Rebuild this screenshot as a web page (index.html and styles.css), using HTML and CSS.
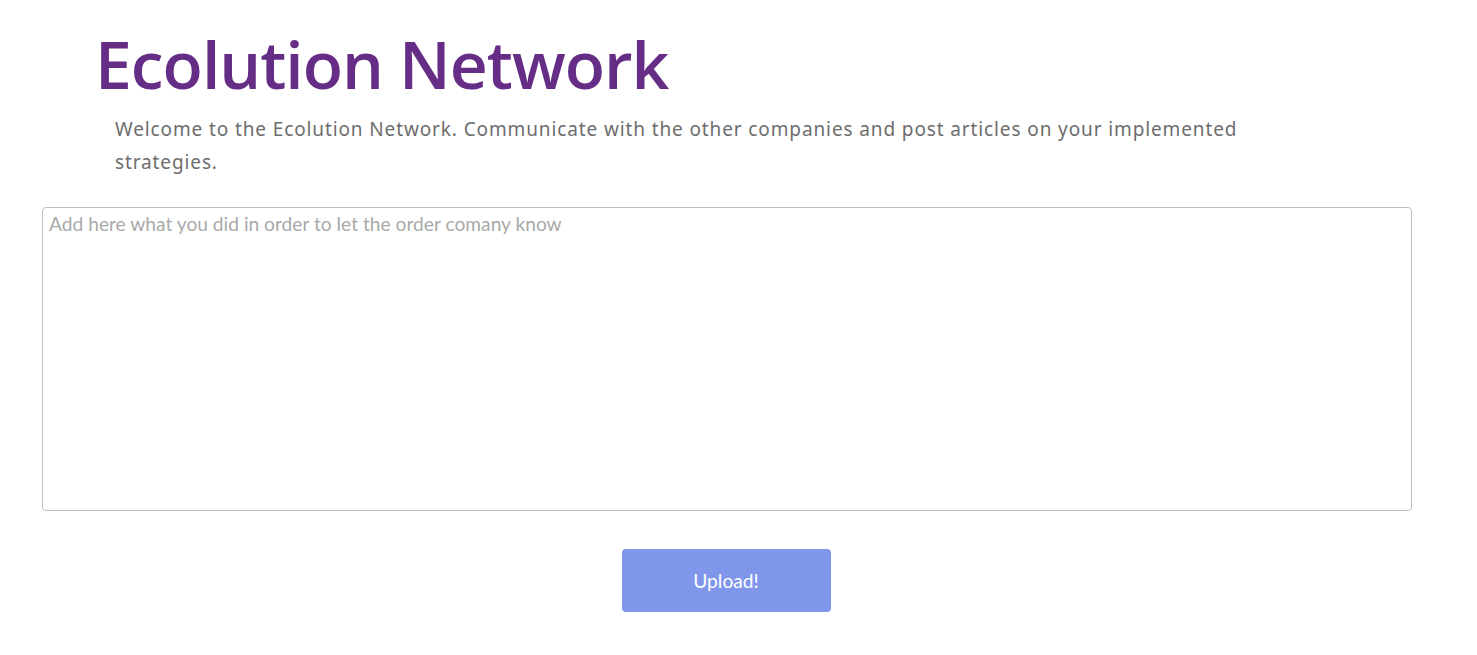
FILE: index.html
```html
<!DOCTYPE html>
<html>
<head>
<meta charset="utf-8">
<link rel="stylesheet" href="styles.css">
</head>
<body>
<div class="page">
  <header class="intro">
    <h1 class="title">Ecolution Network</h1>
    <p class="lead">Welcome to the Ecolution Network. Communicate with the other companies and post articles on your implemented strategies.</p>
  </header>
  <form class="post-form">
    <textarea class="post-input" placeholder="Add here what you did in order to let the order comany know"></textarea>
    <div class="actions">
      <button type="button" class="upload-btn">Upload!</button>
    </div>
  </form>
</div>
</body>
</html>
```
FILE: styles.css
```css
html, body {
  margin: 0;
  padding: 0;
  background: #ffffff;
}
.page {
  padding: 0 66px 0 42px;
}
.intro {
  padding-left: 53px;
}
.title {
  margin: 0;
  padding-top: 21px;
  font-family: "Open Sans", "Noto Sans", sans-serif;
  font-weight: 600;
  font-size: 66px;
  line-height: 84px;
  color: #652d86;
  letter-spacing: -1px;
}
.lead {
  margin: 8px 0 0 20px;
  max-width: 1170px;
  font-family: "Noto Sans", "Open Sans", sans-serif;
  font-size: 19px;
  line-height: 33px;
  letter-spacing: 0.88px;
  color: #6d6d6d;
}
.post-form {
  margin-top: 28px;
}
.post-input {
  display: block;
  box-sizing: border-box;
  width: 1370px;
  height: 304px;
  margin: 0;
  padding: 5px 6px;
  border: 1px solid #bdbdbd;
  border-radius: 4px;
  font-family: "Lato", sans-serif;
  font-size: 19.2px;
  line-height: 22px;
  color: #444;
  resize: none;
  outline: none;
}
.post-input::placeholder {
  color: #a9a9a9;
}
.actions {
  display: flex;
  justify-content: center;
  width: 1368px;
  padding-top: 38px;
}
.upload-btn {
  width: 209px;
  height: 63px;
  border: none;
  border-radius: 4px;
  background: #8096ea;
  color: #ffffff;
  font-family: "Lato", sans-serif;
  font-size: 19.2px;
  cursor: pointer;
}
```
